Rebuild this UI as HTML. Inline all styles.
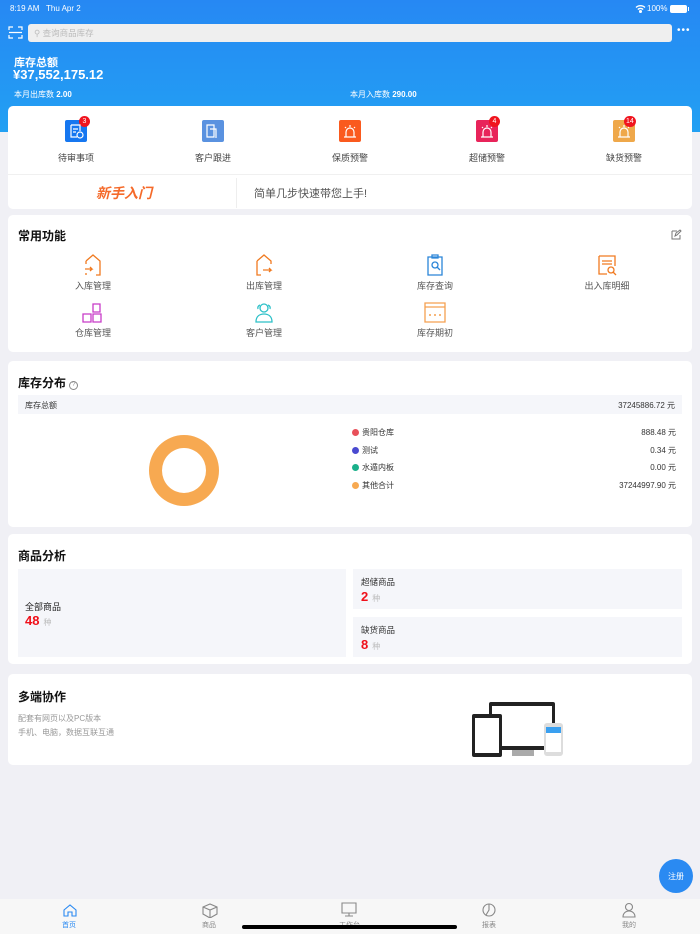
<!DOCTYPE html>
<html><head><meta charset="utf-8"><style>
*{margin:0;padding:0;box-sizing:border-box}
body{width:700px;height:934px;overflow:hidden;background:#f0f0f5;font-family:"Liberation Sans","Noto Sans CJK SC",sans-serif;position:relative;color:#222}
.abs{position:absolute}
.hdr{left:0;top:0;width:700px;height:132px;background:linear-gradient(#2688f3,#22a0f3)}
.card{position:absolute;left:8px;width:684px;background:#fff;border-radius:5px}
.t{position:absolute;white-space:nowrap}
.ttl{font-size:12px;font-weight:bold;color:#111}
.ic{position:absolute;width:22px;height:22px;border-radius:2px}
.badge{position:absolute;height:11px;min-width:11px;border-radius:6px;background:#f0141e;color:#fff;font-size:7px;line-height:11px;text-align:center;padding:0 2px}
.lab{font-size:9px;color:#444;text-align:center;width:120px}
.lab2{font-size:9px;color:#555;text-align:center;width:120px}
.dot{display:inline-block;width:7px;height:7px;border-radius:50%;margin-right:3px;vertical-align:-0.5px}
.box{position:absolute;background:#f5f6fa}
.red{color:#f0101a;font-weight:bold;font-size:13px}
.zh{color:#bbb;font-size:8px;margin-left:4px}
</style></head><body>
<div class="abs hdr"></div>
<div class="t" style="left:10px;top:4px;font-size:8px;color:#fff">8:19 AM&nbsp;&nbsp;&nbsp;Thu Apr 2</div>
<svg class="abs" style="left:635px;top:4px" width="11" height="9" fill="none" stroke="#fff" stroke-width="1.3"><path d="M1 3.5a6.5 6.5 0 0 1 9 0M2.8 5.5a4 4 0 0 1 5.4 0"/><circle cx="5.5" cy="7.5" r="0.9" fill="#fff"/></svg>
<div class="t" style="left:647px;top:4px;font-size:8px;color:#fff">100%</div>
<div class="abs" style="left:670px;top:5px;width:17px;height:8px;border-radius:2px;background:#fff"></div>
<div class="abs" style="left:688px;top:7px;width:1px;height:4px;background:#fff"></div>
<svg class="abs" style="left:8px;top:25px" width="15" height="15" viewBox="0 0 15 15" fill="none" stroke="#fff" stroke-width="1.2"><path d="M1 5V2h4M10 2h4v3M14 10v3h-4M5 13H1v-3M1 7.5h13"/></svg>
<div class="abs" style="left:28px;top:24px;width:644px;height:18px;background:#efefef;border-radius:3px"></div>
<div class="t" style="left:34px;top:27px;font-size:8.5px;color:#bbb">&#9906; 查询商品库存</div>
<div class="t" style="left:677px;top:25px;font-size:10px;color:#fff;letter-spacing:1px">•••</div>
<div class="t" style="left:14px;top:54px;font-size:11px;color:#fff;font-weight:bold">库存总额</div>
<div class="t" style="left:13px;top:67px;font-size:13px;color:#fff;font-weight:bold">¥37,552,175.12</div>
<div class="t" style="left:14px;top:89px;font-size:8px;color:#fff">本月出库数 <b>2.00</b></div>
<div class="t" style="left:350px;top:89px;font-size:8px;color:#fff">本月入库数 <b>290.00</b></div>

<div class="card" style="top:106px;height:103px"></div>
<div class="ic" style="left:65px;top:120px;background:#1677f0"></div><div class="badge" style="left:79px;top:116px">3</div>
<div class="ic" style="left:202px;top:120px;background:#5a92e0"></div>
<div class="ic" style="left:339px;top:120px;background:#fa5a1e"></div>
<div class="ic" style="left:476px;top:120px;background:#e8245a"></div><div class="badge" style="left:489px;top:116px">4</div>
<div class="ic" style="left:613px;top:120px;background:#efa84a"></div><div class="badge" style="left:624px;top:116px">14</div>
<svg class="abs" style="left:65px;top:120px" width="700" height="22" fill="none" stroke="#fff" stroke-width="1.2">
<path d="M6 5h9v6M6 5v12h6M8 9h5M8 12h3"/><circle cx="15" cy="15" r="3"/>
<path d="M142 5h7v12h-7zM145 9h6v9"/>
<path d="M279 17h12M281 17v-5a4 4 0 0 1 8 0v5M285 5v2M280 7l1 1M290 7l-1 1"/>
<path d="M416 17h12M418 17v-5a4 4 0 0 1 8 0v5M422 5v2M417 7l1 1M427 7l-1 1"/>
<path d="M553 17h12M555 17v-5a4 4 0 0 1 8 0v5M559 5v2M554 7l1 1M564 7l-1 1"/>
</svg>
<div class="t lab" style="left:16px;top:151px">待审事项</div>
<div class="t lab" style="left:153px;top:151px">客户跟进</div>
<div class="t lab" style="left:290px;top:151px">保质预警</div>
<div class="t lab" style="left:427px;top:151px">超储预警</div>
<div class="t lab" style="left:564px;top:151px">缺货预警</div>
<div class="abs" style="left:8px;top:174px;width:684px;height:1px;background:#f0f0f0"></div>
<div class="abs" style="left:236px;top:178px;width:1px;height:30px;background:#eee"></div>
<div class="t" style="left:96px;top:183px;font-size:14px;color:#f56a2a;font-weight:bold;font-style:italic">新手入门</div>
<div class="t" style="left:254px;top:185px;font-size:11px;color:#555">简单几步快速带您上手!</div>

<div class="card" style="top:215px;height:137px"></div>
<div class="t ttl" style="left:18px;top:227px">常用功能</div>
<svg class="abs" style="left:671px;top:229px" width="11" height="11" fill="none" stroke="#777" stroke-width="1"><path d="M1 2h5M1 2v8h8V6M4 7l1-3 4-3 1 1-4 4z"/></svg>
<svg class="abs" style="left:0;top:254px" width="700" height="72" fill="none" stroke-width="1.3">
<path stroke="#f07a20" d="M86 7l7-6 7 6v14h-4M86 7v3M85 15h7l-2-2M92 15l-2 2M86 19v2"/>
<path stroke="#f07a20" d="M257 7l7-6 7 6v3M257 7v14h4M263 16h8l-2-2M271 16l-2 2"/>
<path stroke="#2a85d8" d="M428 3h14v18h-14zM432 1h6v3h-6z"/><circle stroke="#2a85d8" cx="435" cy="11" r="3"/><path stroke="#2a85d8" d="M437 13l3 3"/>
<path stroke="#f07a20" d="M599 2h16v10M599 2v18h8M602 7h10M602 10h10"/><circle stroke="#f07a20" cx="611" cy="16" r="3"/><path stroke="#f07a20" d="M613 18l3 3"/>
<path stroke="#c83cc8" d="M93 50h7v8h-7zM83 60h8v8h-8zM93 60h8v8h-8z"/>
<circle stroke="#2cc0c8" cx="264" cy="54" r="4"/><path stroke="#2cc0c8" d="M256 68c0-6 4-8 8-8s8 2 8 8z M258 55a3 3 0 0 1 2-4M270 55a3 3 0 0 0-2-4"/>
<path stroke="#f5a050" d="M425 49h20v19h-20zM425 53h20"/><circle fill="#f5a050" stroke="none" cx="430" cy="61" r="1"/><circle fill="#f5a050" stroke="none" cx="435" cy="61" r="1"/><circle fill="#f5a050" stroke="none" cx="440" cy="61" r="1"/>
</svg>
<div class="t lab2" style="left:33px;top:279px">入库管理</div>
<div class="t lab2" style="left:204px;top:279px">出库管理</div>
<div class="t lab2" style="left:375px;top:279px">库存查询</div>
<div class="t lab2" style="left:547px;top:279px">出入库明细</div>
<div class="t lab2" style="left:33px;top:326px">仓库管理</div>
<div class="t lab2" style="left:204px;top:326px">客户管理</div>
<div class="t lab2" style="left:375px;top:326px">库存期初</div>

<div class="card" style="top:361px;height:166px"></div>
<div class="t ttl" style="left:18px;top:374px">库存分布 <span style="display:inline-block;width:9px;height:9px;border:1px solid #888;border-radius:50%;font-size:6px;line-height:7px;text-align:center;color:#888;font-weight:normal;vertical-align:1px">?</span></div>
<div class="box" style="left:18px;top:395px;width:664px;height:19px"></div>
<div class="t" style="left:25px;top:400px;font-size:8px;color:#333">库存总额</div>
<div class="t" style="right:25px;top:400px;font-size:8px;color:#333">37245886.72 元</div>
<div class="abs" style="left:149px;top:435px;width:70px;height:71px;border-radius:50%;border:13px solid #f7a951"></div>
<div class="t" style="left:352px;top:427px;font-size:8px;color:#333"><span class="dot" style="background:#e8505a"></span>贵阳仓库</div>
<div class="t" style="left:352px;top:445px;font-size:8px;color:#333"><span class="dot" style="background:#4a4ad0"></span>测试</div>
<div class="t" style="left:352px;top:462px;font-size:8px;color:#333"><span class="dot" style="background:#1ab08a"></span>水遁内板</div>
<div class="t" style="left:352px;top:480px;font-size:8px;color:#333"><span class="dot" style="background:#f7a951"></span>其他合计</div>
<div class="t" style="right:24px;top:427px;font-size:8px;color:#333">888.48 元</div>
<div class="t" style="right:24px;top:445px;font-size:8px;color:#333">0.34 元</div>
<div class="t" style="right:24px;top:462px;font-size:8px;color:#333">0.00 元</div>
<div class="t" style="right:24px;top:480px;font-size:8px;color:#333">37244997.90 元</div>

<div class="card" style="top:534px;height:130px"></div>
<div class="t ttl" style="left:18px;top:547px">商品分析</div>
<div class="box" style="left:18px;top:569px;width:328px;height:88px"></div>
<div class="box" style="left:353px;top:569px;width:329px;height:40px"></div>
<div class="box" style="left:353px;top:617px;width:329px;height:40px"></div>
<div class="t" style="left:25px;top:600px;font-size:9px;color:#222">全部商品</div>
<div class="t" style="left:25px;top:612px"><span class="red">48</span><span class="zh">种</span></div>
<div class="t" style="left:361px;top:576px;font-size:8.5px;color:#333">超储商品</div>
<div class="t" style="left:361px;top:588px"><span class="red">2</span><span class="zh">种</span></div>
<div class="t" style="left:361px;top:624px;font-size:8.5px;color:#333">缺货商品</div>
<div class="t" style="left:361px;top:636px"><span class="red">8</span><span class="zh">种</span></div>

<div class="card" style="top:674px;height:91px"></div>
<div class="t ttl" style="left:18px;top:688px">多端协作</div>
<div class="t" style="left:18px;top:713px;font-size:8px;color:#999">配套有网页以及PC版本</div>
<div class="t" style="left:18px;top:727px;font-size:8px;color:#999">手机、电脑，数据互联互通</div>
<div class="abs" style="left:489px;top:702px;width:66px;height:48px;background:#222;border-radius:2px"></div>
<div class="abs" style="left:492px;top:706px;width:60px;height:40px;background:#fff"></div>
<div class="abs" style="left:512px;top:750px;width:22px;height:6px;background:#aaa"></div>
<div class="abs" style="left:472px;top:714px;width:30px;height:43px;background:#222;border-radius:2px"></div>
<div class="abs" style="left:475px;top:718px;width:24px;height:35px;background:#fff"></div>
<div class="abs" style="left:544px;top:723px;width:19px;height:33px;background:#ddd;border-radius:3px"></div>
<div class="abs" style="left:546px;top:727px;width:15px;height:25px;background:#fff"></div>
<div class="abs" style="left:546px;top:727px;width:15px;height:6px;background:#3aa0f0"></div>

<div class="abs" style="left:659px;top:859px;width:34px;height:34px;border-radius:50%;background:#2a8af2"></div>
<div class="t" style="left:668px;top:871px;font-size:8px;color:#fff">注册</div>
<div class="abs" style="left:0;top:899px;width:700px;height:35px;background:#f7f7f7"></div>
<svg class="abs" style="left:0;top:902px" width="700" height="16" fill="none" stroke-width="1.1">
<path stroke="#2a8af2" d="M64 8l6-5 6 5v6h-4v-4h-4v4h-4z"/>
<path stroke="#888" d="M203 5l7-3 7 3v7l-7 4-7-4zM203 5l7 3 7-3M210 8v8"/>
<path stroke="#888" d="M342 1h14v10h-14zM349 11v3M345 14h8"/>
<circle stroke="#888" cx="489" cy="8" r="6"/><path stroke="#888" d="M489 2v6l-3 5"/>
<circle stroke="#888" cx="629" cy="5" r="3.5"/><path stroke="#888" d="M623 15c0-4 3-6 6-6s6 2 6 6z"/>
</svg>
<div class="t" style="left:62px;top:920px;font-size:7px;color:#2a8af2">首页</div>
<div class="t" style="left:202px;top:920px;font-size:7px;color:#888">商品</div>
<div class="t" style="left:339px;top:920px;font-size:7px;color:#888">工作台</div>
<div class="t" style="left:482px;top:920px;font-size:7px;color:#888">报表</div>
<div class="t" style="left:622px;top:920px;font-size:7px;color:#888">我的</div>
<div class="abs" style="left:242px;top:925px;width:215px;height:4px;border-radius:2px;background:#000"></div>
</body></html>
